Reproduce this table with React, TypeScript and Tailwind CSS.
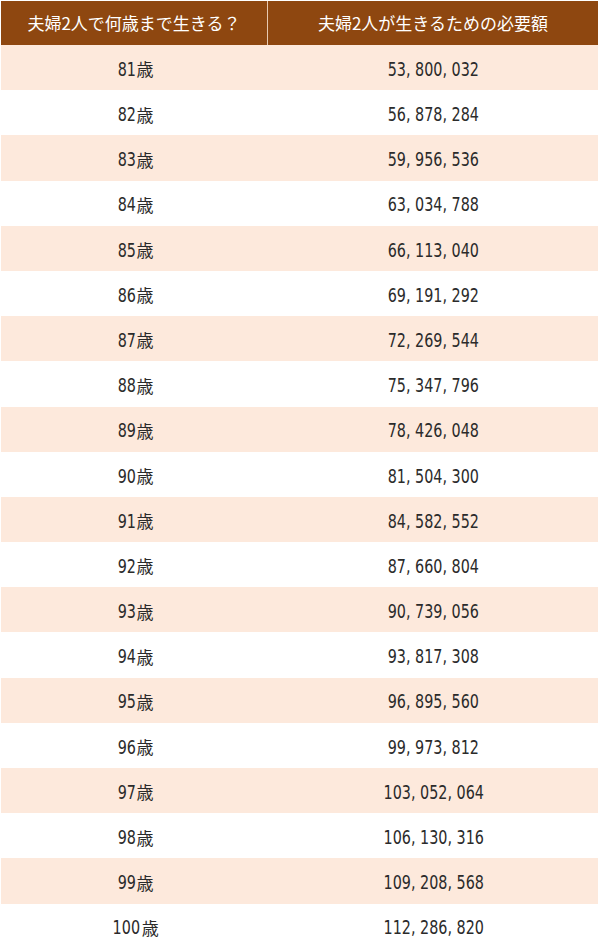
const rows: [string, string][] = [
  ['81歳', '53, 800, 032'],
  ['82歳', '56, 878, 284'],
  ['83歳', '59, 956, 536'],
  ['84歳', '63, 034, 788'],
  ['85歳', '66, 113, 040'],
  ['86歳', '69, 191, 292'],
  ['87歳', '72, 269, 544'],
  ['88歳', '75, 347, 796'],
  ['89歳', '78, 426, 048'],
  ['90歳', '81, 504, 300'],
  ['91歳', '84, 582, 552'],
  ['92歳', '87, 660, 804'],
  ['93歳', '90, 739, 056'],
  ['94歳', '93, 817, 308'],
  ['95歳', '96, 895, 560'],
  ['96歳', '99, 973, 812'],
  ['97歳', '103, 052, 064'],
  ['98歳', '106, 130, 316'],
  ['99歳', '109, 208, 568'],
  ['100歳', '112, 286, 820'],
]

// narrow, tall digits like the original condensed face
const digits = "inline-block scale-x-[0.84] font-['DejaVu_Sans_Condensed','Noto_Sans_CJK_JP',sans-serif] text-[19px]"

export default function App() {
  return (
    <div className="w-[600px] h-[950px] bg-white pt-px pl-px font-['Noto_Sans_CJK_JP',sans-serif] overflow-hidden">
      <div className="w-[597px]">
        <div className="grid grid-cols-[267px_1fr] h-[44px] bg-[#8e4710] text-white text-[17px]">
          <div className="flex items-center justify-center border-r border-[#e8c9b0]">夫婦2人で何歳まで生きる？</div>
          <div className="flex items-center justify-center">夫婦2人が生きるための必要額</div>
        </div>
        {rows.map(([age, amount], i) => (
          <div
            key={age}
            className={`grid grid-cols-[267px_1fr] h-[45.2px] text-[#2b2b2b] ${i % 2 === 0 ? 'bg-[#fde9dc]' : 'bg-white'}`}
          >
            <div className="flex items-center justify-center pt-[3px] pl-[1px]">
              <span className={`${digits} -mx-[1px]`}>{age.replace('歳', '')}</span>
              <span className="text-[17px]">歳</span>
            </div>
            <div className="flex items-center justify-center pt-[3px] pl-[1px]">
              <span className={`${digits} whitespace-pre`}>{amount}</span>
            </div>
          </div>
        ))}
      </div>
    </div>
  )
}
